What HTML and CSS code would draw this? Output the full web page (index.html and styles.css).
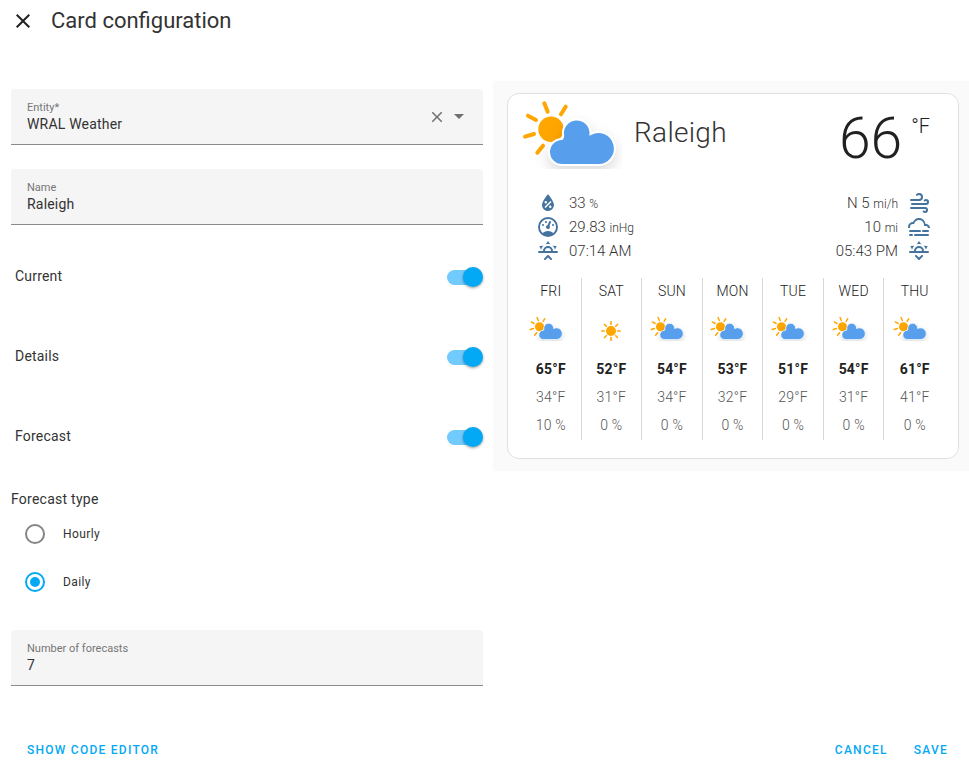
FILE: index.html
```html
<!DOCTYPE html>
<html>
<head>
<meta charset="utf-8"/>
<title>Card configuration</title>
<link rel="stylesheet" href="styles.css">
</head>
<body>
<svg class="defs" width="0" height="0">
	<symbol id="partly-cloudy" viewBox="0 0 100 70">
		<g class="rays">
			<line x1="22.3" y1="4.3" x2="25.7" y2="12.7"/>
			<line x1="43.7" y1="7.7" x2="39" y2="15.3"/>
			<line x1="6" y1="16.7" x2="14" y2="21"/>
			<line x1="3" y1="37.7" x2="12" y2="35"/>
			<line x1="15.3" y1="53.7" x2="21" y2="46.7"/>
		</g>
		<circle class="sun" cx="29" cy="30.3" r="12.7"/>
		<path class="cloud" d="M40 66A13 13 0 0 1 40 40Q41 38.5 41.2 37A13.8 13.8 0 1 1 68.5 35A16.5 16.5 0 1 1 76.5 66Z"/>
	</symbol>
	<symbol id="sunny" viewBox="0 0 24 24">
		<g class="rays small-rays">
			<line x1="12" y1="1" x2="12" y2="4"/>
			<line x1="12" y1="20" x2="12" y2="23"/>
			<line x1="1" y1="12" x2="4" y2="12"/>
			<line x1="20" y1="12" x2="23" y2="12"/>
			<line x1="4.2" y1="4.2" x2="6.3" y2="6.3"/>
			<line x1="17.7" y1="17.7" x2="19.8" y2="19.8"/>
			<line x1="4.2" y1="19.8" x2="6.3" y2="17.7"/>
			<line x1="17.7" y1="6.3" x2="19.8" y2="4.2"/>
		</g>
		<circle class="sun" cx="12" cy="12" r="6"/>
	</symbol>
	<symbol id="sunset-base" viewBox="0 0 24 24">
		<path d="M3,12H7A5,5 0 0,1 12,7A5,5 0 0,1 17,12H21A1,1 0 0,1 22,13A1,1 0 0,1 21,14H3A1,1 0 0,1 2,13A1,1 0 0,1 3,12M15,12A3,3 0 0,0 12,9A3,3 0 0,0 9,12H15M12,2L14.39,5.42C13.65,5.15 12.84,5 12,5C11.16,5 10.35,5.15 9.61,5.42L12,2M3.34,7L7.5,6.65C6.9,7.16 6.36,7.78 5.94,8.5C5.5,9.24 5.25,10 5.11,10.79L3.34,7M20.65,7L18.88,10.79C18.74,10 18.47,9.23 18.05,8.5C17.63,7.78 17.1,7.15 16.5,6.64L20.65,7Z"/>
	</symbol>
</svg>

<header class="top-bar">
	<svg class="close-icon" viewBox="0 0 24 24"><path d="M19,6.41L17.59,5L12,10.59L6.41,5L5,6.41L10.59,12L5,17.59L6.41,19L12,13.41L17.59,19L19,17.59L13.41,12L19,6.41Z"/></svg>
	<h1 class="title">Card configuration</h1>
</header>

<main class="content">
	<section class="editor">
		<div class="field">
			<div class="field-text">
				<div class="field-label">Entity*</div>
				<div class="field-value">WRAL Weather</div>
			</div>
			<svg class="clear-icon" viewBox="0 0 24 24"><path d="M19,6.41L17.59,5L12,10.59L6.41,5L5,6.41L10.59,12L5,17.59L6.41,19L12,13.41L17.59,19L19,17.59L13.41,12L19,6.41Z"/></svg>
			<span class="arrow"></span>
		</div>
		<div class="field">
			<div class="field-text">
				<div class="field-label">Name</div>
				<div class="field-value">Raleigh</div>
			</div>
		</div>

		<div class="toggles">
			<div class="toggle-row"><span class="toggle-label">Current</span><span class="switch"></span></div>
			<div class="toggle-row"><span class="toggle-label">Details</span><span class="switch"></span></div>
			<div class="toggle-row"><span class="toggle-label">Forecast</span><span class="switch"></span></div>
		</div>

		<div class="group-label">Forecast type</div>
		<div class="radio-row"><span class="radio"></span><span class="radio-label">Hourly</span></div>
		<div class="radio-row"><span class="radio checked"></span><span class="radio-label">Daily</span></div>

		<div class="field field-number">
			<div class="field-text">
				<div class="field-label">Number of forecasts</div>
				<div class="field-value">7</div>
			</div>
		</div>
	</section>

	<section class="preview">
		<div class="card">
			<div class="current">
				<svg class="big-icon"><use href="#partly-cloudy"/></svg>
				<div class="city">Raleigh</div>
				<div class="temp">66</div>
				<div class="temp-unit">°F</div>
			</div>

			<div class="details">
				<div class="detail-col">
					<div class="detail">
						<svg class="detail-icon" viewBox="0 0 24 24"><path d="M12,3.25C12,3.25 6,10 6,14C6,17.32 8.69,20 12,20A6,6 0 0,0 18,14C18,10 12,3.25 12,3.25M14.47,9.97L15.53,11.03L9.53,17.03L8.47,15.97M9.75,10A1.25,1.25 0 0,1 11,11.25A1.25,1.25 0 0,1 9.75,12.5A1.25,1.25 0 0,1 8.5,11.25A1.25,1.25 0 0,1 9.75,10M14.25,14.5A1.25,1.25 0 0,1 15.5,15.75A1.25,1.25 0 0,1 14.25,17A1.25,1.25 0 0,1 13,15.75A1.25,1.25 0 0,1 14.25,14.5Z"/></svg>
						<span>33 <small>%</small></span>
					</div>
					<div class="detail">
						<svg class="detail-icon" viewBox="0 0 24 24"><path d="M12,2A10,10 0 0,0 2,12A10,10 0 0,0 12,22A10,10 0 0,0 22,12A10,10 0 0,0 12,2M12,4A8,8 0 0,1 20,12C20,14.4 19,16.5 17.3,18C15.9,16.7 14,16 12,16C10,16 8.2,16.7 6.7,18C5,16.5 4,14.4 4,12A8,8 0 0,1 12,4M14,5.89C13.62,5.9 13.26,6.15 13.1,6.54L11.81,9.77L11.71,10C11,10.13 10.41,10.6 10.14,11.26C9.73,12.29 10.23,13.45 11.26,13.86C12.29,14.27 13.45,13.77 13.86,12.74C14.12,12.08 14,11.32 13.57,10.76L13.67,10.5L14.96,7.29L14.97,7.26C15.17,6.75 14.92,6.17 14.41,5.96C14.28,5.91 14.15,5.89 14,5.89M10,6A1,1 0 0,0 9,7A1,1 0 0,0 10,8A1,1 0 0,0 11,7A1,1 0 0,0 10,6M7,9A1,1 0 0,0 6,10A1,1 0 0,0 7,11A1,1 0 0,0 8,10A1,1 0 0,0 7,9M17,9A1,1 0 0,0 16,10A1,1 0 0,0 17,11A1,1 0 0,0 18,10A1,1 0 0,0 17,9Z"/></svg>
						<span>29.83 <small>inHg</small></span>
					</div>
					<div class="detail">
						<svg class="detail-icon" viewBox="0 0 24 24"><use href="#sunset-base"/><path d="M12.71,16.3L15.82,19.41C16.21,19.8 16.21,20.43 15.82,20.82C15.43,21.21 14.8,21.21 14.41,20.82L12,18.41L9.59,20.82C9.2,21.21 8.57,21.21 8.18,20.82C7.79,20.43 7.79,19.8 8.18,19.41L11.29,16.3C11.5,16.1 11.74,16 12,16C12.26,16 12.5,16.1 12.71,16.3Z"/></svg>
						<span>07:14 AM</span>
					</div>
				</div>
				<div class="detail-col detail-col-right">
					<div class="detail">
						<span>N 5 <small>mi/h</small></span>
						<svg class="detail-icon" viewBox="0 0 24 24"><path d="M4,10A1,1 0 0,1 3,9A1,1 0 0,1 4,8H12A2,2 0 0,0 14,6A2,2 0 0,0 12,4C11.45,4 10.95,4.22 10.59,4.59C10.2,5 9.56,5 9.17,4.59C8.78,4.2 8.78,3.56 9.17,3.17C9.9,2.45 10.9,2 12,2A4,4 0 0,1 16,6A4,4 0 0,1 12,10H4M19,12A1,1 0 0,0 20,11A1,1 0 0,0 19,10C18.72,10 18.47,10.11 18.29,10.29C17.9,10.68 17.27,10.68 16.88,10.29C16.5,9.9 16.5,9.27 16.88,8.88C17.42,8.34 18.17,8 19,8A3,3 0 0,1 22,11A3,3 0 0,1 19,14H5A1,1 0 0,1 4,13A1,1 0 0,1 5,12H19M18,18H4A1,1 0 0,1 3,17A1,1 0 0,1 4,16H18A3,3 0 0,1 21,19A3,3 0 0,1 18,22C17.17,22 16.42,21.66 15.88,21.12C15.5,20.73 15.5,20.1 15.88,19.71C16.27,19.32 16.9,19.32 17.29,19.71C17.47,19.89 17.72,20 18,20A1,1 0 0,0 19,19A1,1 0 0,0 18,18Z"/></svg>
					</div>
					<div class="detail">
						<span>10 <small>mi</small></span>
						<svg class="detail-icon" viewBox="0 0 24 24"><path d="M3,15H13A1,1 0 0,1 14,16A1,1 0 0,1 13,17H3A1,1 0 0,1 2,16A1,1 0 0,1 3,15M16,15H21A1,1 0 0,1 22,16A1,1 0 0,1 21,17H16A1,1 0 0,1 15,16A1,1 0 0,1 16,15M1,12A5,5 0 0,1 6,7C7,4.65 9.3,3 12,3C15.43,3 18.24,5.66 18.5,9.03L19,9C21.19,9 22.97,10.76 23,13H21A2,2 0 0,0 19,11H17V10A5,5 0 0,0 12,5C9.5,5 7.45,6.82 7.06,9.19C6.73,9.07 6.37,9 6,9A3,3 0 0,0 3,12C3,12.35 3.06,12.69 3.17,13H1.1L1,12M3,19H5A1,1 0 0,1 6,20A1,1 0 0,1 5,21H3A1,1 0 0,1 2,20A1,1 0 0,1 3,19M8,19H21A1,1 0 0,1 22,20A1,1 0 0,1 21,21H8A1,1 0 0,1 7,20A1,1 0 0,1 8,19Z"/></svg>
					</div>
					<div class="detail">
						<span>05:43 PM</span>
						<svg class="detail-icon" viewBox="0 0 24 24"><use href="#sunset-base"/><path d="M12.71,20.7L15.82,17.6C16.21,17.21 16.21,16.57 15.82,16.18C15.43,15.79 14.8,15.79 14.41,16.18L12,18.59L9.59,16.18C9.2,15.79 8.57,15.79 8.18,16.18C7.79,16.57 7.79,17.21 8.18,17.6L11.29,20.7C11.5,20.9 11.74,21 12,21C12.26,21 12.5,20.9 12.71,20.7Z"/></svg>
					</div>
				</div>
			</div>

			<div class="forecast">
				<div class="day"><div class="day-name">FRI</div><div class="day-icon"><svg class="cloudy-small"><use href="#partly-cloudy"/></svg></div><div class="high">65°F</div><div class="low">34°F</div><div class="rain">10 %</div></div>
				<div class="day"><div class="day-name">SAT</div><div class="day-icon"><svg class="sunny-small"><use href="#sunny"/></svg></div><div class="high">52°F</div><div class="low">31°F</div><div class="rain">0 %</div></div>
				<div class="day"><div class="day-name">SUN</div><div class="day-icon"><svg class="cloudy-small"><use href="#partly-cloudy"/></svg></div><div class="high">54°F</div><div class="low">34°F</div><div class="rain">0 %</div></div>
				<div class="day"><div class="day-name">MON</div><div class="day-icon"><svg class="cloudy-small"><use href="#partly-cloudy"/></svg></div><div class="high">53°F</div><div class="low">32°F</div><div class="rain">0 %</div></div>
				<div class="day"><div class="day-name">TUE</div><div class="day-icon"><svg class="cloudy-small"><use href="#partly-cloudy"/></svg></div><div class="high">51°F</div><div class="low">29°F</div><div class="rain">0 %</div></div>
				<div class="day"><div class="day-name">WED</div><div class="day-icon"><svg class="cloudy-small"><use href="#partly-cloudy"/></svg></div><div class="high">54°F</div><div class="low">31°F</div><div class="rain">0 %</div></div>
				<div class="day"><div class="day-name">THU</div><div class="day-icon"><svg class="cloudy-small"><use href="#partly-cloudy"/></svg></div><div class="high">61°F</div><div class="low">41°F</div><div class="rain">0 %</div></div>
			</div>
		</div>
	</section>
</main>

<footer class="actions">
	<span class="action">Show code editor</span>
	<span class="action-right">
		<span class="action">Cancel</span>
		<span class="action">Save</span>
	</span>
</footer>
</body>
</html>
```

FILE: styles.css
```css
html, body {
	margin: 0;
	height: 100%;
}
body {
	display: flex;
	flex-direction: column;
	height: 769px;
	overflow: hidden;
	font-family: Roboto, "Liberation Sans", sans-serif;
	color: #212121;
	background-color: #fff;
}
.defs {
	position: absolute;
}

/* top bar */
.top-bar {
	display: flex;
	align-items: center;
	height: 42px;
	padding-left: 11px;
	margin-bottom: 39px;
}
.close-icon {
	width: 24px;
	height: 24px;
	fill: #212121;
}
.title {
	margin: -2px 0 0 16px;
	font-size: 22px;
	font-weight: 400;
	color: #333;
}

/* left column */
.content {
	display: flex;
	gap: 10px;
	padding-left: 11px;
}
.editor {
	width: 472px;
	padding-top: 8px;
}
.field {
	display: flex;
	align-items: center;
	box-sizing: border-box;
	height: 56px;
	padding: 0 16px;
	margin-bottom: 24px;
	background-color: #f5f5f5;
	border-bottom: 1px solid #8a8a8a;
	border-radius: 4px 4px 0 0;
}
.field-text {
	flex: 1;
}
.field-label {
	margin: 1px 0 -1px;
	font-size: 11px;
	line-height: 14px;
	color: #757575;
}
.field-value {
	font-size: 14px;
	line-height: 20px;
	letter-spacing: 0.2px;
	color: #333;
}
.clear-icon {
	width: 18px;
	height: 18px;
	margin-right: 8px;
	fill: #6f6f6f;
}
.arrow {
	width: 0;
	height: 0;
	margin-right: 3px;
	border-left: 5px solid transparent;
	border-right: 5px solid transparent;
	border-top: 5px solid #6f6f6f;
}
.field-number {
	margin: 24px 0 0;
}
.toggles {
	margin-top: -12px;
}
.toggle-row {
	display: flex;
	align-items: center;
	justify-content: space-between;
	height: 80px;
	padding-left: 4px;
	font-size: 14px;
	letter-spacing: 0.2px;
	color: #333;
}
.toggle-label {
	margin-top: -2px;
}
.switch {
	position: relative;
	width: 33px;
	height: 15px;
	margin-right: 3px;
	border-radius: 8px;
	background-color: #72cbfd;
}
.switch::after {
	content: "";
	position: absolute;
	right: -3px;
	top: -3px;
	width: 20px;
	height: 20px;
	border-radius: 50%;
	background-color: #03a9f4;
	box-shadow: 0 1px 3px rgba(0, 0, 0, 0.4);
}
.group-label {
	margin: 12px 0 1px;
	font-size: 14px;
	line-height: 20px;
	letter-spacing: 0.25px;
	color: #333;
}
.radio-row {
	display: flex;
	align-items: center;
	height: 48px;
	padding-left: 14px;
}
.radio {
	position: relative;
	box-sizing: border-box;
	width: 20px;
	height: 20px;
	border: 2px solid #858585;
	border-radius: 50%;
}
.radio.checked {
	border-color: #03a9f4;
}
.radio.checked::after {
	content: "";
	position: absolute;
	left: 3px;
	top: 3px;
	width: 10px;
	height: 10px;
	border-radius: 50%;
	background-color: #03a9f4;
}
.radio-label {
	margin-left: 18px;
	font-size: 12px;
	letter-spacing: 0.4px;
	color: #333;
}

/* preview */
.preview {
	box-sizing: border-box;
	width: 476px;
	height: 390px;
	padding: 12px 10px 12px 14px;
	background-color: #fafafa;
}
.card {
	box-sizing: border-box;
	height: 366px;
	padding: 0 13px;
	background-color: #fff;
	border: 1px solid #e0e0e0;
	border-radius: 12px;
}
.current {
	display: flex;
	height: 88px;
}
.big-icon {
	width: 100px;
	height: 70px;
	margin: 5px 0 0 1px;
	flex: none;
	overflow: visible;
}
.rays line {
	stroke: #ffa600;
	stroke-width: 4;
	stroke-linecap: round;
}
.small-rays line {
	stroke-width: 2;
}
.sun {
	fill: #ffa600;
}
.cloud {
	fill: #579fec;
	stroke: #fff;
	stroke-width: 2;
	filter: drop-shadow(0 6px 7px rgba(0, 0, 0, 0.14));
}
.city {
	margin: 21px 0 0 12px;
	font-size: 28px;
	font-weight: 300;
	line-height: 36px;
	letter-spacing: 0.3px;
	color: #333;
}
.temp {
	margin: 11px 0 0 auto;
	font-size: 57px;
	font-weight: 300;
	line-height: 68px;
}
.temp-unit {
	margin: 20px 15px 0 9px;
	font-size: 20px;
	font-weight: 300;
	line-height: 24px;
}
.details {
	display: flex;
	justify-content: space-between;
	height: 96px;
	padding: 9px 14px 0 15px;
	box-sizing: border-box;
	font-size: 15px;
	font-weight: 300;
	color: #333;
}
.detail {
	display: flex;
	align-items: center;
	gap: 9px;
	height: 24px;
}
.detail-col-right .detail {
	justify-content: flex-end;
}
.detail small {
	font-size: 12px;
}
.detail-icon {
	width: 24px;
	height: 24px;
	fill: #44739e;
}
.forecast {
	display: grid;
	grid-template-columns: repeat(7, 1fr);
}
.day {
	height: 162px;
	border-right: 1px solid #d8d8d8;
	text-align: center;
	font-size: 14px;
	line-height: 28px;
}
.day:last-child {
	border-right: none;
}
.day-name {
	line-height: 27px;
	margin-bottom: 1px;
	font-weight: 300;
	letter-spacing: 0.2px;
}
.day-icon {
	display: flex;
	align-items: center;
	justify-content: center;
	height: 50px;
	margin-bottom: -1px;
}
.cloudy-small {
	width: 36px;
	height: 25px;
	margin: 0 8px 6px 0;
	overflow: visible;
}
.sunny-small {
	width: 20px;
	height: 20px;
	margin-right: 1px;
}
.high {
	font-weight: 700;
	letter-spacing: 0.2px;
}
.low, .rain {
	font-weight: 300;
	color: #555;
	letter-spacing: 0.2px;
}

/* footer */
.actions {
	display: flex;
	align-items: center;
	justify-content: space-between;
	height: 40px;
	margin-top: auto;
	padding: 2px 21px 0 27px;
	box-sizing: border-box;
}
.action {
	font-size: 12px;
	font-weight: 500;
	letter-spacing: 1.25px;
	text-transform: uppercase;
	color: #03a9f4;
}
.action-right {
	display: flex;
	gap: 26px;
}
```
